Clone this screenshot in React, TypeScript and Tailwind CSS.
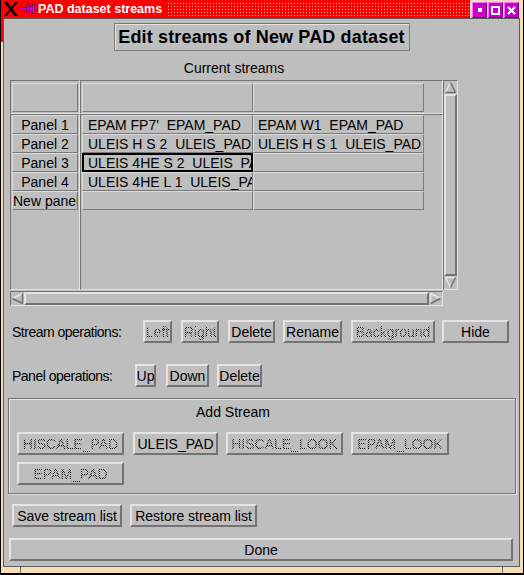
import React from "react";

const raised =
  "border-2 border-t-[#e4e4e4] border-l-[#e4e4e4] border-b-[#737373] border-r-[#737373]";
const sunken =
  "border border-t-[#737373] border-l-[#737373] border-b-[#e4e4e4] border-r-[#e4e4e4]";
const cellBorder =
  "border border-t-[#dcdcdc] border-l-[#dcdcdc] border-b-[#7a7a7a] border-r-[#7a7a7a]";
const stipple =
  "bg-[image:repeating-conic-gradient(#000_0_25%,transparent_0_50%)] [background-size:2px_2px] bg-clip-text text-transparent";

function Btn({
  label,
  className = "",
  disabled = false,
}: {
  label: string;
  className?: string;
  disabled?: boolean;
}) {
  return (
    <div
      className={`h-[23px] shrink-0 flex items-center justify-center bg-[#bebebe] ${raised} ${className}`}
    >
      <span
        className={`text-[14px] leading-[16px] whitespace-nowrap ${
          disabled ? stipple : "text-black"
        }`}
      >
        {label}
      </span>
    </div>
  );
}

function XLogo() {
  return (
    <svg width="14" height="14" viewBox="0 0 14 14" className="shrink-0">
      <path d="M0 0 L3.5 0 L14 14 L10.5 14 Z" fill="#000" />
      <path d="M11.5 0 L14 0 L2.5 14 L0 14 Z" fill="#000" />
    </svg>
  );
}

function Pin() {
  return (
    <svg width="16" height="10" viewBox="0 0 16 10" className="shrink-0 ml-[1px]">
      <rect x="0.3" y="4" width="8" height="2" fill="#ff00ff" stroke="#500050" strokeWidth="0.6" />
      <rect x="8" y="0.5" width="2" height="9" fill="#ff00ff" stroke="#500050" strokeWidth="0.6" />
      <rect x="10" y="2.5" width="4" height="5" fill="#d000d0" stroke="#500050" strokeWidth="0.6" />
      <rect x="13.5" y="0.5" width="2" height="9" fill="#ff00ff" stroke="#500050" strokeWidth="0.6" />
    </svg>
  );
}

function Dots() {
  return (
    <svg width="100%" height="100%" className="block">
      <defs>
        <pattern id="titledots" width="3" height="3" patternUnits="userSpaceOnUse">
          <rect x="1" y="1" width="1" height="1" fill="#ffb8b8" />
        </pattern>
      </defs>
      <rect width="100%" height="100%" fill="url(#titledots)" />
    </svg>
  );
}

function WinBtn({ children }: { children: React.ReactNode }) {
  return (
    <div className="w-[15px] h-[16px] bg-[#c800c8] border border-t-[#ff70ff] border-l-[#ff70ff] border-b-[#700070] border-r-[#700070] flex items-center justify-center">
      {children}
    </div>
  );
}

function ArrowUp() {
  return (
    <svg width="13" height="13" viewBox="0 0 13 13" className="shrink-0 block">
      <polygon points="6.5,1.5 11.5,11.5 1.5,11.5" fill="#bebebe" />
      <line x1="1.5" y1="11.5" x2="6.5" y2="1.5" stroke="#e8e8e8" strokeWidth="1.4" />
      <line x1="6.5" y1="1.5" x2="11.5" y2="11.5" stroke="#6e6e6e" strokeWidth="1.4" />
      <line x1="11.5" y1="11.5" x2="1.5" y2="11.5" stroke="#6e6e6e" strokeWidth="1.4" />
    </svg>
  );
}
function ArrowDown() {
  return (
    <svg width="13" height="13" viewBox="0 0 13 13" className="shrink-0 block">
      <polygon points="1.5,1.5 11.5,1.5 6.5,11.5" fill="#bebebe" />
      <line x1="1.5" y1="1.5" x2="11.5" y2="1.5" stroke="#e8e8e8" strokeWidth="1.4" />
      <line x1="1.5" y1="1.5" x2="6.5" y2="11.5" stroke="#e8e8e8" strokeWidth="1.4" />
      <line x1="11.5" y1="1.5" x2="6.5" y2="11.5" stroke="#6e6e6e" strokeWidth="1.4" />
    </svg>
  );
}
function ArrowLeft() {
  return (
    <svg width="13" height="13" viewBox="0 0 13 13" className="shrink-0 block">
      <polygon points="1.5,6.5 11.5,1.5 11.5,11.5" fill="#bebebe" />
      <line x1="1.5" y1="6.5" x2="11.5" y2="1.5" stroke="#e8e8e8" strokeWidth="1.4" />
      <line x1="11.5" y1="1.5" x2="11.5" y2="11.5" stroke="#6e6e6e" strokeWidth="1.4" />
      <line x1="11.5" y1="11.5" x2="1.5" y2="6.5" stroke="#6e6e6e" strokeWidth="1.4" />
    </svg>
  );
}
function ArrowRight() {
  return (
    <svg width="13" height="13" viewBox="0 0 13 13" className="shrink-0 block">
      <polygon points="1.5,1.5 11.5,6.5 1.5,11.5" fill="#bebebe" />
      <line x1="1.5" y1="1.5" x2="1.5" y2="11.5" stroke="#e8e8e8" strokeWidth="1.4" />
      <line x1="1.5" y1="1.5" x2="11.5" y2="6.5" stroke="#e8e8e8" strokeWidth="1.4" />
      <line x1="11.5" y1="6.5" x2="1.5" y2="11.5" stroke="#6e6e6e" strokeWidth="1.4" />
    </svg>
  );
}

const rows: { label: string; a: string; b: string; left?: boolean }[] = [
  { label: "Panel 1", a: "EPAM FP7'  EPAM_PAD", b: "EPAM W1  EPAM_PAD" },
  { label: "Panel 2", a: "ULEIS H S 2  ULEIS_PAD", b: "ULEIS H S 1  ULEIS_PAD" },
  { label: "Panel 3", a: "ULEIS 4HE S 2  ULEIS_PAD", b: "" },
  { label: "Panel 4", a: "ULEIS 4HE L 1  ULEIS_PAD", b: "" },
  { label: "New panel", a: "", b: "", left: true },
];

export default function App() {
  return (
    <div className="w-[524px] h-[575px] flex flex-col bg-[#f5deb3] border-l border-r border-b-2 border-black font-['Liberation_Sans',Arial,sans-serif] text-black overflow-hidden">
      {/* Title bar */}
      <div className="h-[18px] flex shrink-0">
        <div className="flex-1 bg-[#ff0000] flex items-center pl-[3px] min-w-0">
          <XLogo />
          <Pin />
          <span className="ml-[3px] text-white font-bold text-[12.5px] leading-none whitespace-nowrap">
            PAD dataset streams
          </span>
          <div className="flex-1 h-[15px] ml-[5px]">
            <Dots />
          </div>
        </div>
        <div className="w-[53px] bg-[#f5deb3] flex pl-[2px] pt-[2px] gap-[1px]">
          <WinBtn>
            <div className="w-[4px] h-[4px] bg-white" />
          </WinBtn>
          <WinBtn>
            <div className="w-[9px] h-[9px] border-2 border-white" />
          </WinBtn>
          <WinBtn>
            <svg width="9" height="9" viewBox="0 0 9 9">
              <path d="M1 1 L8 8 M8 1 L1 8" stroke="#fff" strokeWidth="2.2" />
            </svg>
          </WinBtn>
        </div>
      </div>

      {/* Body */}
      <div className="flex-1 flex min-h-0">
        <div className="w-[2px] flex flex-col">
          <div className="h-[24px] bg-[#ff0000]" />
        </div>
        <div className="flex-1 bg-[#bebebe] border border-[#5c5c5c] flex flex-col min-w-0">
          {/* Heading */}
          <div className="mt-[4px] self-center w-[296px] h-[28px] border border-[#7a7a7a] shadow-[inset_1px_1px_0_#e4e4e4] flex items-center justify-center">
            <span className="text-[18px] font-bold leading-none tracking-[0.15px] whitespace-nowrap">
              Edit streams of New PAD dataset
            </span>
          </div>

          {/* Table block */}
          <div className="ml-[6px] w-[448px] flex flex-col">
            <div className="mt-[9px] h-[16px] text-center text-[14px] leading-[16px]">
              Current streams
            </div>
            <div className="mt-[4px] flex">
              <div className="w-[433px] h-[210px] grid grid-cols-[70px_363px] grid-rows-[34px_176px]">
                <div className={`${sunken} pl-px pt-[2px] overflow-hidden`}>
                  <div className={`${cellBorder} w-[66px] h-[29px]`} />
                </div>
                <div className={`${sunken} pl-px pt-[2px] overflow-hidden flex`}>
                  <div className={`${cellBorder} w-[171px] h-[29px] shrink-0`} />
                  <div className={`${cellBorder} w-[171px] h-[29px] shrink-0`} />
                </div>
                <div className={`${sunken} pl-px overflow-hidden flex flex-col`}>
                  {rows.map((r) => (
                    <div
                      key={r.label}
                      className={`${cellBorder} w-[66px] h-[19px] shrink-0 flex items-center overflow-hidden ${
                        r.left ? "justify-start" : "justify-center"
                      }`}
                    >
                      <span className="text-[14px] leading-none whitespace-nowrap">{r.label}</span>
                    </div>
                  ))}
                </div>
                <div className={`${sunken} pl-px overflow-hidden flex flex-col`}>
                  {rows.map((r, i) => (
                    <div key={i} className="flex h-[19px] shrink-0">
                      <div
                        className={`w-[171px] h-[19px] shrink-0 flex items-center overflow-hidden ${
                          i === 2 ? "border-2 border-black pl-[4px]" : `${cellBorder} pl-[5px]`
                        }`}
                      >
                        <span className="text-[14px] leading-none whitespace-pre">{r.a}</span>
                      </div>
                      <div
                        className={`${cellBorder} w-[171px] h-[19px] shrink-0 flex items-center overflow-hidden pl-[4px]`}
                      >
                        <span className="text-[14px] leading-none whitespace-pre">{r.b}</span>
                      </div>
                    </div>
                  ))}
                </div>
              </div>
              <div className={`w-[15px] h-[210px] ${sunken} flex flex-col`}>
                <ArrowUp />
                <div className={`flex-1 ${raised}`} />
                <ArrowDown />
              </div>
            </div>
            <div className={`mt-px w-[433px] h-[15px] ${sunken} flex`}>
              <ArrowLeft />
              <div className={`flex-1 ${raised}`} />
              <ArrowRight />
            </div>
          </div>

          {/* Stream operations */}
          <div className="mt-[14px] ml-[8px] flex items-center h-[23px]">
            <div className="w-[131px] text-[14px] tracking-[-0.5px] leading-none whitespace-nowrap">
              Stream operations:
            </div>
            <Btn label="Left" disabled className="w-[29px]" />
            <Btn label="Right" disabled className="ml-[9px] w-[38px]" />
            <Btn label="Delete" className="ml-[9px] w-[47px]" />
            <Btn label="Rename" className="ml-[8px] w-[59px]" />
            <Btn label="Background" disabled className="ml-[9px] w-[84px]" />
            <Btn label="Hide" className="ml-[7px] w-[67px]" />
          </div>

          {/* Panel operations */}
          <div className="mt-[21px] ml-[8px] flex items-center h-[23px]">
            <div className="w-[123px] text-[14px] tracking-[-0.5px] leading-none whitespace-nowrap">
              Panel operations:
            </div>
            <Btn label="Up" className="w-[21px]" />
            <Btn label="Down" className="ml-[10px] w-[43px]" />
            <Btn label="Delete" className="ml-[8px] w-[45px]" />
          </div>

          {/* Add Stream */}
          <div className="mt-[11px] ml-[4px] w-[508px] h-[96px] border border-[#737373] shadow-[inset_1px_1px_0_#e4e4e4,1px_1px_0_#e4e4e4] pl-[8px] flex flex-col">
            <div className="w-[432px] mt-[5px] h-[16px] text-center text-[14px] leading-[16px]">
              Add Stream
            </div>
            <div className="mt-[12px] flex">
              <Btn label="HISCALE_PAD" disabled className="w-[107px]" />
              <Btn label="ULEIS_PAD" className="ml-[9px] w-[85px]" />
              <Btn label="HISCALE_LOOK" disabled className="ml-[8px] w-[117px]" />
              <Btn label="EPAM_LOOK" disabled className="ml-[8px] w-[98px]" />
            </div>
            <div className="mt-[7px] flex">
              <Btn label="EPAM_PAD" disabled className="w-[107px]" />
            </div>
          </div>

          {/* Save / restore */}
          <div className="mt-[10px] ml-[8px] flex">
            <Btn label="Save stream list" className="w-[110px]" />
            <Btn label="Restore stream list" className="ml-[8px] w-[127px]" />
          </div>

          {/* Done */}
          <div className="mt-[11px] ml-[5px] flex">
            <Btn label="Done" className="w-[504px]" />
          </div>
        </div>
        <div className="w-[3px]" />
      </div>

      {/* Bottom frame */}
      <div className="h-[6px] flex shrink-0">
        <div className="w-[19px]" />
        <div className="w-px bg-[#6e6e6e]" />
        <div className="flex-1" />
        <div className="w-px bg-[#6e6e6e]" />
        <div className="w-[20px]" />
      </div>
    </div>
  );
}
